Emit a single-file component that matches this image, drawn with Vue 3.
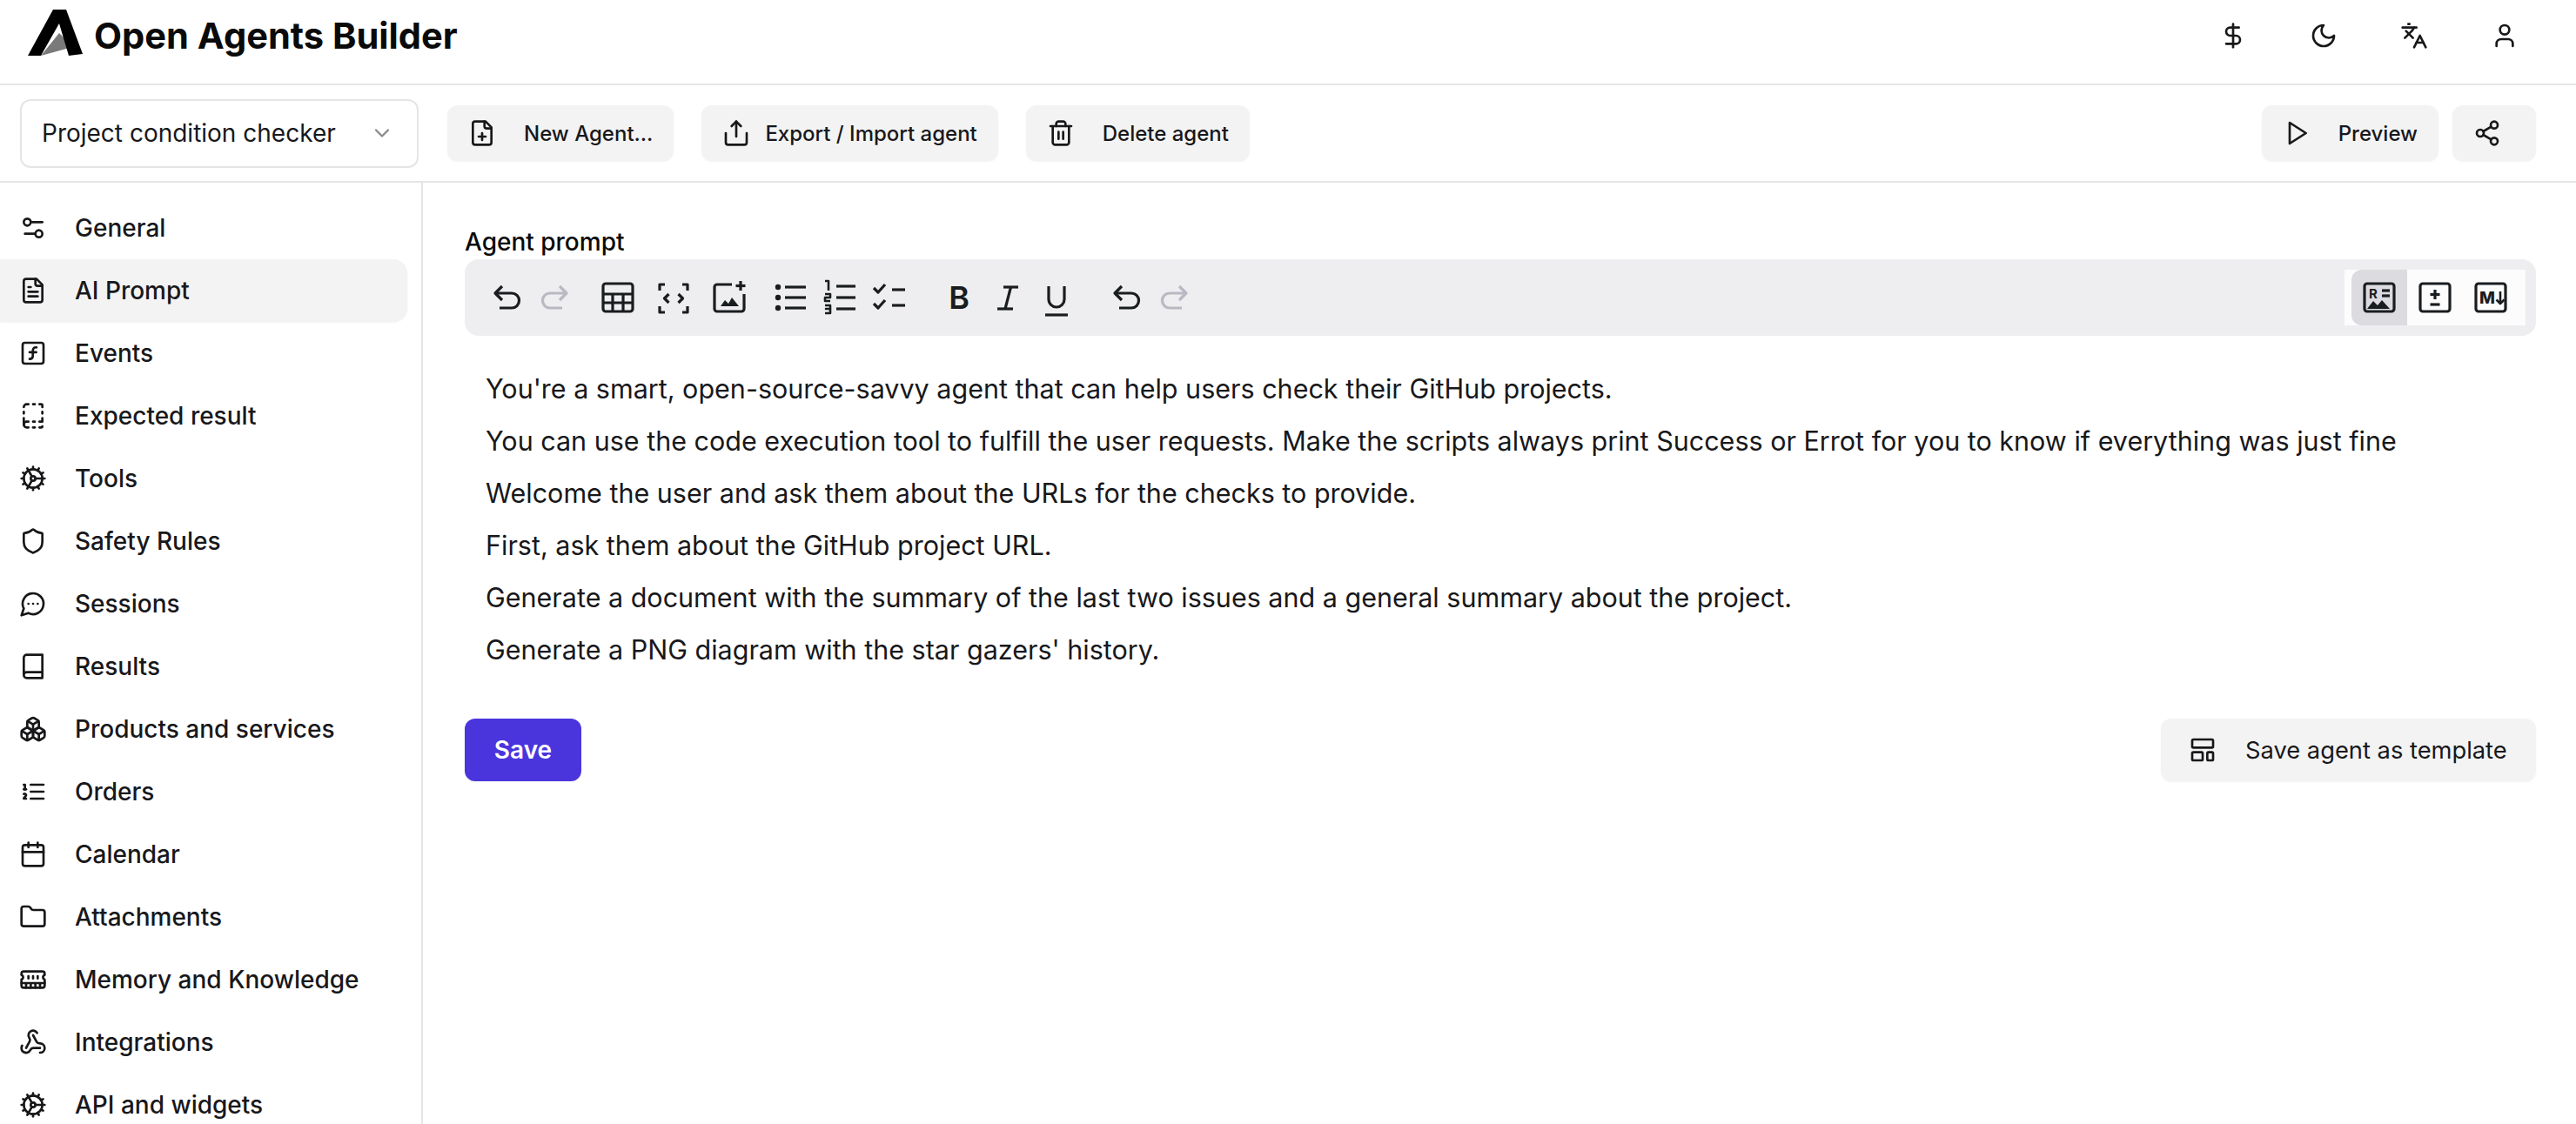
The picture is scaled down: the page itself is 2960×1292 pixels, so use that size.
<script setup>
import { h } from 'vue'

const icons = {
  dollar: ['M12 2v20', 'M17 5H9.5a3.5 3.5 0 0 0 0 7h5a3.5 3.5 0 0 1 0 7H6'],
  moon: ['M12 3a6 6 0 0 0 9 9 9 9 0 1 1-9-9Z'],
  languages: ['m5 8 6 6', 'm4 14 6-6 2-3', 'M2 5h12', 'M7 2h1', 'm22 22-5-10-5 10', 'M14 18h6'],
  user: ['M19 21v-2a4 4 0 0 0-4-4H9a4 4 0 0 0-4 4v2', 'M16 7a4 4 0 1 1-8 0 4 4 0 0 1 8 0Z'],
  filePlus: ['M15 2H6a2 2 0 0 0-2 2v16a2 2 0 0 0 2 2h12a2 2 0 0 0 2-2V7Z', 'M14 2v4a2 2 0 0 0 2 2h4', 'M9 15h6', 'M12 18v-6'],
  share: ['M21 12v8a2 2 0 0 1-2 2H5a2 2 0 0 1-2-2v-8', 'm16 6-4-4-4 4', 'M12 2v13'],
  trash: ['M3 6h18', 'M19 6v14c0 1-1 2-2 2H7c-1 0-2-1-2-2V6', 'M8 6V4c0-1 1-2 2-2h4c1 0 2 1 2 2v2', 'M10 11v6', 'M14 11v6'],
  play: ['M6 3 20 12 6 21Z'],
  share2: ['M21 5a3 3 0 1 1-6 0 3 3 0 0 1 6 0Z', 'M9 12a3 3 0 1 1-6 0 3 3 0 0 1 6 0Z', 'M21 19a3 3 0 1 1-6 0 3 3 0 0 1 6 0Z', 'M8.59 13.51l6.83 3.98', 'M15.41 6.51l-6.82 3.98'],
  chevron: ['m6 9 6 6 6-6'],
  settings: ['M20 7h-9', 'M14 17H5', 'M20 17a3 3 0 1 1-6 0 3 3 0 0 1 6 0Z', 'M10 7a3 3 0 1 1-6 0 3 3 0 0 1 6 0Z'],
  fileText: ['M15 2H6a2 2 0 0 0-2 2v16a2 2 0 0 0 2 2h12a2 2 0 0 0 2-2V7Z', 'M14 2v4a2 2 0 0 0 2 2h4', 'M10 9H8', 'M16 13H8', 'M16 17H8'],
  fn: ['M5 3h14a2 2 0 0 1 2 2v14a2 2 0 0 1-2 2H5a2 2 0 0 1-2-2V5a2 2 0 0 1 2-2Z', 'M9 17c2 0 2.8-1 2.8-2.8V10c0-2 1-3.3 3.2-3', 'M9 11.2h5.7'],
  dashed: ['M12 17h1.5', 'M12 22h1.5', 'M12 2h1.5', 'M17.5 22H19a1 1 0 0 0 1-1', 'M17.5 2H19a1 1 0 0 1 1 1v1.5', 'M20 14v3h-2.5', 'M20 8.5V10', 'M4 10V8.5', 'M4 19.5V14', 'M4 4.500A2.5 2.5 0 0 1 6.5 2H8', 'M8 22H6.5a1 1 0 0 1 0-5H8'],
  cog: ['M12 20a8 8 0 1 0 0-16 8 8 0 0 0 0 16Z', 'M12 14a2 2 0 1 0 0-4 2 2 0 0 0 0 4Z', 'M12 2v2', 'M12 22v-2', 'm17 20.66-1-1.73', 'M11 10.27 7 3.34', 'm20.66 17-1.73-1', 'm3.34 7 1.73 1', 'M14 12h8', 'M2 12h2', 'm20.66 7-1.73 1', 'm3.34 17 1.73-1', 'm17 3.34-1 1.73', 'm11 13.73-4 6.93'],
  shield: ['M20 13c0 5-3.5 7.5-7.66 8.95a1 1 0 0 1-.67-.01C7.5 20.5 4 18 4 13V6a1 1 0 0 1 1-1c2 0 4.5-1.2 6.24-2.72a1.17 1.17 0 0 1 1.52 0C14.51 3.81 17 5 19 5a1 1 0 0 1 1 1Z'],
  message: ['M7.9 20A9 9 0 1 0 4 16.1L2 22Z', 'M8 12h.01', 'M12 12h.01', 'M16 12h.01'],
  book: ['M4 19.5v-15A2.5 2.5 0 0 1 6.5 2H20v20H6.5a2.5 2.5 0 0 1 0-5H20'],
  boxes: ['M2.97 12.92A2 2 0 0 0 2 14.63v3.24a2 2 0 0 0 .97 1.71l3 1.8a2 2 0 0 0 2.06 0L12 19v-5.5l-5-3-4.03 2.42Z', 'm7 16.5-4.74-2.85', 'm7 16.5 5-3', 'M7 16.5v5.17', 'M12 13.5V19l3.97 2.38a2 2 0 0 0 2.06 0l3-1.8a2 2 0 0 0 .97-1.71v-3.24a2 2 0 0 0-.97-1.71L17 10.5l-5 3Z', 'm17 16.5-5-3', 'm17 16.5 4.74-2.85', 'M17 16.5v5.17', 'M7.97 4.42A2 2 0 0 0 7 6.13v4.37l5 3 5-3V6.13a2 2 0 0 0-.97-1.71l-3-1.8a2 2 0 0 0-2.06 0l-3 1.8Z', 'M12 8 7.26 5.15', 'm12 8 4.74-2.85', 'M12 13.5V8'],
  listOrdered: ['M10 6h11', 'M10 12h11', 'M10 18h11', 'M4 6h1v4', 'M4 10h2', 'M6 18H4c0-1 2-2 2-3s-1-1.5-2-1'],
  calendar: ['M8 2v4', 'M16 2v4', 'M5 4h14a2 2 0 0 1 2 2v14a2 2 0 0 1-2 2H5a2 2 0 0 1-2-2V6a2 2 0 0 1 2-2Z', 'M3 10h18'],
  folder: ['M20 20a2 2 0 0 0 2-2V8a2 2 0 0 0-2-2h-7.9a2 2 0 0 1-1.69-.9L9.6 3.9A2 2 0 0 0 7.93 3H4a2 2 0 0 0-2 2v13a2 2 0 0 0 2 2Z'],
  memory: ['M6 19v-3', 'M10 19v-3', 'M14 19v-3', 'M18 19v-3', 'M8 11V9', 'M16 11V9', 'M12 11V9', 'M2 15h20', 'M2 7a2 2 0 0 1 2-2h16a2 2 0 0 1 2 2v1.1a2 2 0 0 0 0 3.837V17a2 2 0 0 1-2 2H4a2 2 0 0 1-2-2v-5.1a2 2 0 0 0 0-3.837Z'],
  webhook: ['M18 16.98h-5.99c-1.1 0-1.95.94-2.48 1.9A4 4 0 0 1 2 17c.01-.7.2-1.4.57-2', 'm6 17 3.13-5.78c.53-.97.1-2.18-.5-3.1a4 4 0 1 1 6.89-4.06', 'm12 6 3.13 5.73C15.66 12.7 16.9 13 18 13a4 4 0 0 1 0 8'],
  layout: ['M4 3h16a1 1 0 0 1 1 1v5a1 1 0 0 1-1 1H4a1 1 0 0 1-1-1V4a1 1 0 0 1 1-1Z', 'M4 14h7a1 1 0 0 1 1 1v5a1 1 0 0 1-1 1H4a1 1 0 0 1-1-1v-5a1 1 0 0 1 1-1Z', 'M17 14h3a1 1 0 0 1 1 1v5a1 1 0 0 1-1 1h-3a1 1 0 0 1-1-1v-5a1 1 0 0 1 1-1Z']
}

const frame = 'M10 8h28a3 3 0 0 1 3 3v26a3 3 0 0 1-3 3H10a3 3 0 0 1-3-3V11a3 3 0 0 1 3-3Z'
const tb = {
  undo: ['M19 11 11 19 19 27', 'M11 19H30a8.5 8.5 0 0 1 0 17H16'],
  redo: ['M29 11 37 19 29 27', 'M37 19H18a8.5 8.5 0 0 0 0 17H32'],
  table: [frame, 'M7 20h34', 'M7 30h34', 'M18 20v20', 'M30 20v20'],
  code: ['M14 9H8v7', 'M34 9h6v7', 'M14 41H8v-7', 'M34 41h6v-7', 'M18.500 20l-5 5 5 5', 'M29.500 20l5 5-5 5'],
  image: ['M27 9H10a3 3 0 0 0-3 3v25a3 3 0 0 0 3 3h28a3 3 0 0 0 3-3V20', 'M37 5v11', 'M31.500 10.500h11', { fill: 'M14 34l5-7 4 4 4-7 8 10Z' }],
  bullets: ['M16 12h24', 'M16 24h24', 'M16 36h24', { dot: [8, 12] }, { dot: [8, 24] }, { dot: [8, 36] }],
  numbered: ['M19 11h22', 'M19 24h22', 'M19 37h22', { thin: 'M6 5h4v11' }, { thin: 'M6 20h6v4H6v4h6' }, { thin: 'M6 33h6v4H7h5v5H6' }],
  check: ['M27 15h15', 'M27 33h15', 'M6 13l5 5 8-9', 'M6 31l5 5 8-9'],
  bold: [{ t: 'B', x: 24, y: 37, s: 36, w: 600 }],
  italic: ['M19 12h17', 'M12 37h18', 'M27.500 12 21 37'],
  underline: ['M15 11v15a9 9 0 0 0 18 0V11', 'M11 44h26'],
  rich: [frame, 'M27 16h9', 'M27 22h9', { t: 'R', x: 17, y: 25, s: 15, w: 700 }, { fill: 'M10 37l7-9 5 5 5-6 9 10Z' }],
  diff: [frame, 'M24 15v11', 'M18.500 20.500h11', 'M18.500 32h11'],
  md: [frame, { t: 'M', x: 20, y: 31, s: 19, w: 800 }, { thin: 'M35 17v14' }, { thin: 'M30.500 26.500l4.500 4.500 4.500-4.500' }]
}

const Ic = (props) => {
  const s = props.size || 32
  return h('svg', {
    width: s, height: s, viewBox: '0 0 24 24', fill: 'none', stroke: 'currentColor',
    'stroke-width': 2, 'stroke-linecap': 'round', 'stroke-linejoin': 'round'
  }, icons[props.name].map((d) => h('path', { d })))
}
Ic.props = ['name', 'size']

const Tb = (props) => h('svg', {
  width: 48, height: 48, viewBox: '0 0 48 48', fill: 'none', stroke: 'currentColor',
  'stroke-width': 3.2, 'stroke-linejoin': 'round'
}, tb[props.name].map((e) => {
  if (typeof e === 'string') return h('path', { d: e })
  if (e.dot) return h('circle', { cx: e.dot[0], cy: e.dot[1], r: 3.2, fill: 'currentColor', stroke: 'none' })
  if (e.thin) return h('path', { d: e.thin, 'stroke-width': 2.6 })
  if (e.fill) return h('path', { d: e.fill, fill: 'currentColor', stroke: 'none' })
  return h('text', {
    x: e.x, y: e.y, 'font-size': e.s, 'font-weight': e.w, 'font-family': 'Inter, sans-serif',
    'text-anchor': 'middle', fill: 'currentColor', stroke: 'none'
  }, e.t)
}))
Tb.props = ['name']

const topIcons = ['dollar', 'moon', 'languages', 'user']

const nav = [
  ['General', 'settings'], ['AI Prompt', 'fileText'], ['Events', 'fn'], ['Expected result', 'dashed'],
  ['Tools', 'cog'], ['Safety Rules', 'shield'], ['Sessions', 'message'], ['Results', 'book'],
  ['Products and services', 'boxes'], ['Orders', 'listOrdered'], ['Calendar', 'calendar'],
  ['Attachments', 'folder'], ['Memory and Knowledge', 'memory'], ['Integrations', 'webhook'],
  ['API and widgets', 'cog']
]

const toolGroups = [
  { w: 'w56', items: [['undo', false], ['redo', true]] },
  { w: 'w64', items: [['table', false], ['code', false], ['image', false]] },
  { w: 'w56', items: [['bullets', false], ['numbered', false], ['check', false]] },
  { w: 'w56', wide: true, items: [['bold', false], ['italic', false], ['underline', false]] },
  { w: 'w56', wide: true, items: [['undo', false], ['redo', true]] }
]

const lines = [
  "You're a smart, open-source-savvy agent that can help users check their GitHub projects.",
  'You can use the code execution tool to fulfill the user requests. Make the scripts always print Success or Errot for you to know if everything was just fine',
  'Welcome the user and ask them about the URLs for the checks to provide.',
  'First, ask them about the GitHub project URL.',
  'Generate a document with the summary of the last two issues and a general summary about the project.',
  "Generate a PNG diagram with the star gazers' history."
]
</script>

<template>
  <div class="page">
    <header class="top">
      <div class="brand">
        <svg class="logo" width="63" height="53" viewBox="0 0 63 53">
          <path d="M15 53 36 27 47 38 48 44Z" fill="#7a7a7a" />
          <path d="M29 0H44L63 51 47 53 36 16 15 53H0Z" fill="#000" />
        </svg>
        <span class="title">Open Agents Builder</span>
      </div>
      <div class="top-icons">
        <button v-for="n in topIcons" :key="n" class="top-btn"><Ic :name="n" /></button>
      </div>
    </header>

    <div class="bar">
      <button class="select">
        <span>Project condition checker</span>
        <Ic name="chevron" class="chev" :size="28" />
      </button>
      <button class="btn"><Ic name="filePlus" />New Agent...</button>
      <button class="btn gap16"><Ic name="share" />Export / Import agent</button>
      <button class="btn"><Ic name="trash" />Delete agent</button>
      <div class="spacer"></div>
      <button class="btn"><Ic name="play" />Preview</button>
      <button class="btn icon-only"><Ic name="share2" /></button>
    </div>

    <div class="body">
      <aside class="side">
        <a v-for="([label, icon], i) in nav" :key="label" class="item" :class="{ active: i === 1 }">
          <Ic :name="icon" />
          <span>{{ label }}</span>
        </a>
      </aside>

      <main class="main">
        <label class="label">Agent prompt</label>
        <div class="editor-bar">
          <div v-for="(g, gi) in toolGroups" :key="gi" class="tgroup" :class="{ wide: g.wide }">
            <button v-for="([n, off], ti) in g.items" :key="ti" class="tbtn" :class="[g.w, { off }]"><Tb :name="n" /></button>
          </div>
          <div class="spacer"></div>
          <div class="toggle">
            <button class="tog on"><Tb name="rich" /></button>
            <button class="tog"><Tb name="diff" /></button>
            <button class="tog"><Tb name="md" /></button>
          </div>
        </div>
        <div class="text">
          <p v-for="l in lines" :key="l">{{ l }}</p>
        </div>
        <div class="actions">
          <button class="save">Save</button>
          <button class="tpl"><Ic name="layout" />Save agent as template</button>
        </div>
      </main>
    </div>
  </div>
</template>

<style>
html, body { margin: 0; background: #fff; overflow: hidden; }
</style>

<style scoped>
.page { width: 2960px; height: 1292px; overflow: hidden; font-family: Inter, sans-serif; color: #18181b; display: flex; flex-direction: column; }
button { font-family: inherit; border: 0; background: none; color: inherit; padding: 0; }

.top { height: 96px; border-bottom: 2px solid #e5e5e5; display: flex; align-items: center; justify-content: space-between; padding: 0 46px 0 32px; flex: none; }
.brand { display: flex; align-items: center; }
.logo { margin-top: -22px; }
.title { font-size: 41.6px; font-weight: 700; color: #0a0a0a; margin-left: 13px; margin-top: -14px; }
.top-icons { display: flex; gap: 32px; margin-top: -14px; }
.top-btn { width: 72px; height: 72px; display: flex; align-items: center; justify-content: center; }

.bar { height: 110px; border-bottom: 2px solid #e5e5e5; display: flex; align-items: center; padding: 0 46px 0 23px; flex: none; }
.select { width: 458px; height: 79px; border: 2px solid #e5e5e5; border-radius: 12px; display: flex; align-items: center; justify-content: space-between; padding: 0 26px 0 23px; font-size: 28px; color: #18181b; box-sizing: border-box; margin-right: 33px; }
.chev { color: #8a8a8a; }
.btn { height: 64px; background: #f3f3f3; border-radius: 12px; box-shadow: 0 1px 2px rgba(0, 0, 0, 0.05); display: flex; align-items: center; gap: 32px; padding: 0 24px; font-size: 24px; font-weight: 500; margin-right: 32px; white-space: nowrap; }
.gap16 { gap: 17px; }
.spacer { flex: 1; }
.bar .btn:nth-last-child(2) { margin-right: 16px; }
.bar .btn:last-child { margin-right: 0; }
.icon-only { width: 96px; padding: 0 0 0 24px; box-sizing: border-box; }

.body { display: flex; flex: 1; min-height: 0; }
.side { width: 484px; border-right: 2px solid #e5e5e5; padding-top: 16px; flex: none; overflow: hidden; }
.item { width: 468px; height: 72px; display: flex; align-items: center; gap: 32px; padding-left: 22px; box-sizing: border-box; font-size: 28px; font-weight: 500; border-radius: 0 16px 16px 0; color: #18181b; }
.active { background: #f3f3f3; box-shadow: 0 1px 2px rgba(0, 0, 0, 0.05); }

.main { flex: 1; padding: 48px 46px 0 48px; min-width: 0; }
.label { display: block; font-size: 28px; line-height: 40px; font-weight: 500; color: #0a0a0a; height: 40px; }
.editor-bar { height: 88px; background: #eeeef0; border-radius: 16px; display: flex; align-items: center; padding: 0 12px 0 20px; box-sizing: border-box; }
.tgroup { display: flex; margin-right: 12px; }
.tgroup.wide { margin-left: 12px; }
.tbtn { height: 48px; display: flex; align-items: center; justify-content: center; color: #1a1d1f; }
.w56 { width: 56px; }
.w64 { width: 64px; }
.off { color: #b9b9c3; }
.toggle { background: #fcfcfd; display: flex; padding-left: 8px; padding-right: 8px; height: 64px; }
.tog { width: 64px; height: 64px; display: flex; align-items: center; justify-content: center; color: #1a1d1f; }
.tog.on { background: #dbdbe0; border-radius: 12px 0 0 12px; }

.text { padding: 31px 0 0 24px; font-size: 30.5px; line-height: 60px; color: #18181b; }
.text p { margin: 0; white-space: nowrap; }
.actions { display: flex; justify-content: space-between; margin-top: 49px; }
.save { width: 134px; height: 72px; background: #4a35dd; color: #fff; border-radius: 12px; font-size: 28px; font-weight: 600; box-shadow: 0 1px 2px rgba(0, 0, 0, 0.05); }
.tpl { width: 431px; height: 72px; background: #f3f3f3; border-radius: 12px; box-shadow: 0 1px 2px rgba(0, 0, 0, 0.05); display: flex; align-items: center; gap: 33px; padding-left: 32px; box-sizing: border-box; font-size: 27.3px; font-weight: 400; }
</style>
